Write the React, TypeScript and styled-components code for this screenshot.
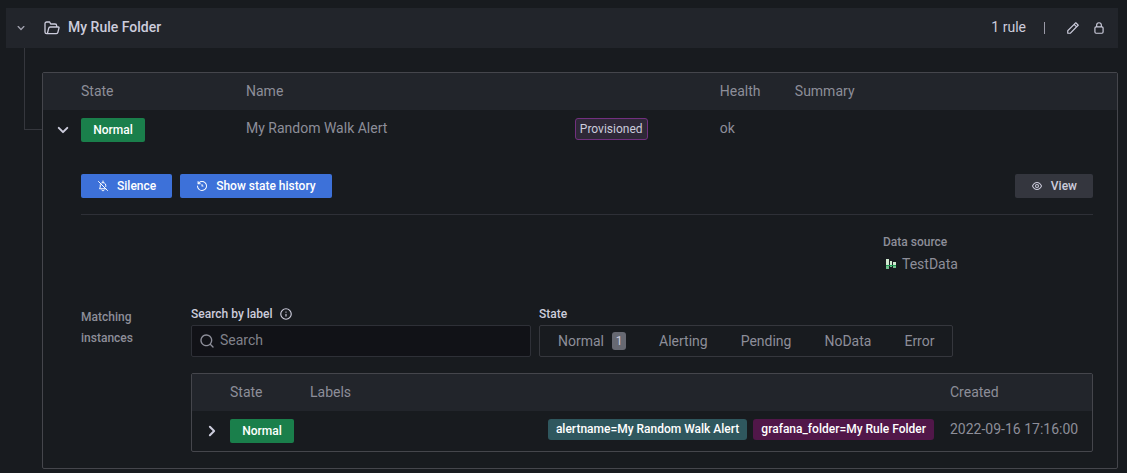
import React, { useState } from "react";
import styled, { createGlobalStyle, css } from "styled-components";

const color = {
  canvas: "#111217",
  page: "#181b1f",
  header: "#22252b",
  text: "#ccccdc",
  muted: "#8d8e99",
  weak: "#2e3037",
  medium: "#35373d",
  strong: "#45464c",
  blue: "#3d71d9",
  green: "#1a7f4b",
};

const GlobalStyle = createGlobalStyle`
  *, *::before, *::after { box-sizing: border-box; }
  body {
    margin: 0;
    background: ${color.page};
    color: ${color.text};
    font: 400 14px/20px Roboto, "Liberation Sans", sans-serif;
  }
  button, input { font: inherit; color: inherit; }
`;

/* ---------- icons ---------- */

const fills = {
  down: "M17,9.17a1,1,0,0,0-1.41,0L12,12.71,8.46,9.17a1,1,0,0,0-1.41,0,1,1,0,0,0,0,1.42l4.24,4.24a1,1,0,0,0,1.42,0L17,10.59A1,1,0,0,0,17,9.17Z",
  right: "M14.83,11.29,10.59,7.05a1,1,0,0,0-1.42,0,1,1,0,0,0,0,1.41L12.71,12,9.17,15.54a1,1,0,0,0,0,1.41,1,1,0,0,0,.71.29,1,1,0,0,0,.71-.29l4.24-4.24A1,1,0,0,0,14.83,11.29Z",
  search: "M21.71,20.29,18,16.61A9,9,0,1,0,16.61,18l3.68,3.68a1,1,0,0,0,1.42,0A1,1,0,0,0,21.71,20.29ZM11,18a7,7,0,1,1,7-7A7,7,0,0,1,11,18Z",
  lock: "M17,9V7A5,5,0,0,0,7,7V9a3,3,0,0,0-3,3v7a3,3,0,0,0,3,3H17a3,3,0,0,0,3-3V12A3,3,0,0,0,17,9ZM9,7a3,3,0,0,1,6,0V9H9Zm9,12a1,1,0,0,1-1,1H7a1,1,0,0,1-1-1V12a1,1,0,0,1,1-1H17a1,1,0,0,1,1,1Z",
  pen: "M22,7.24a1,1,0,0,0-.29-.71L17.47,2.29A1,1,0,0,0,16.76,2a1,1,0,0,0-.71.29L13.22,5.12h0L2.29,16.05a1,1,0,0,0-.29.71V21a1,1,0,0,0,1,1H7.24A1,1,0,0,0,8,21.71L18.87,10.78h0L21.71,8a1.19,1.19,0,0,0,.22-.33,1,1,0,0,0,0-.24.7.7,0,0,0,0-.14ZM6.83,20H4V17.17l9.93-9.93,2.83,2.83ZM18.17,8.66,15.34,5.83l1.42-1.41,2.82,2.82Z",
  info: "M12,2A10,10,0,1,0,22,12,10,10,0,0,0,12,2Zm0,18a8,8,0,1,1,8-8A8,8,0,0,1,12,20Zm0-8.5a1,1,0,0,0-1,1v3a1,1,0,0,0,2,0v-3A1,1,0,0,0,12,11.5Zm0-4a1.25,1.25,0,1,0,1.25,1.25A1.25,1.25,0,0,0,12,7.5Z",
  eye: "M21.92,11.6C19.9,6.91,16.1,4,12,4S4.1,6.91,2.08,11.6a1,1,0,0,0,0,.8C4.1,17.09,7.9,20,12,20s7.9-2.91,9.92-7.6A1,1,0,0,0,21.92,11.6ZM12,18c-3.17,0-6.17-2.29-7.9-6C5.83,8.29,8.83,6,12,6s6.17,2.29,7.9,6C18.17,15.71,15.17,18,12,18ZM12,8a4,4,0,1,0,4,4A4,4,0,0,0,12,8Zm0,6a2,2,0,1,1,2-2A2,2,0,0,1,12,14Z",
  history: "M12,2A10,10,0,0,0,5.12,4.77V3a1,1,0,0,0-2,0V7.5a1,1,0,0,0,1,1H8.62a1,1,0,0,0,0-2H6.22A8,8,0,1,1,4,12a1,1,0,0,0-2,0A10,10,0,1,0,12,2Zm0,6a1,1,0,0,0-1,1v3a1,1,0,0,0,1,1h2a1,1,0,0,0,0-2H13V9A1,1,0,0,0,12,8Z",
};

const strokes = {
  folder: "M5 20.500H4A2.500 2.500 0 0 1 1.500 18V5.500A2.500 2.500 0 0 1 4 3H8.500l1.500 3H16.500A2.500 2.500 0 0 1 19 8.500V10.500M5 20.500l2-8A2.500 2.500 0 0 1 9.500 10.500H21.500a1 1 0 0 1 1 1.300l-1.700 6.700A2.500 2.500 0 0 1 18.500 20.500Z",
  bellSlash: "M3 3L21 21M9.500 5.600A5.500 5.500 0 0 1 17.500 10.500V13M6.500 9.500V14L5 17.500H17.500M9.500 20.500A3 3 0 0 0 14.500 20.500M12 2V4.500",
};

const Svg = styled.svg<{ $size: number }>`
  display: block;
  flex: none;
  width: ${(p) => p.$size}px;
  height: ${(p) => p.$size}px;
`;

type IconName = keyof typeof fills | keyof typeof strokes;

function Icon({ name, size = 14 }: { name: IconName; size?: number }) {
  const filled = name in fills;
  return (
    <Svg $size={size} viewBox="0 0 24 24" aria-hidden="true">
      {filled ? (
        <path d={fills[name as keyof typeof fills]} fill="currentColor" />
      ) : (
        <path
          d={strokes[name as keyof typeof strokes]}
          fill="none"
          stroke="currentColor"
          strokeWidth="2"
          strokeLinecap="round"
          strokeLinejoin="round"
        />
      )}
    </Svg>
  );
}

function TestDataLogo() {
  return (
    <Svg $size={16} viewBox="0 0 16 16" aria-hidden="true">
      <path d="M3 3h3v6H3zM7 5h2v4H7zM10 6h3v3h-3z" fill="#d0e8cf" />
      <path d="M3 9h3v4H3zM7 9h2v2H7zM10 9h3v3h-3z" fill="#73c08c" />
      <path d="M3 9h10v1H3z" fill="#1f9d55" />
    </Svg>
  );
}

/* ---------- page and folder header ---------- */

const Page = styled.main`
  padding: 8px 9px 4px 6px;
`;

const FolderHeader = styled.header`
  display: flex;
  align-items: center;
  height: 40px;
  padding: 0 11px 0 7px;
  background: ${color.header};
`;

const IconButton = styled.button<{ $muted?: boolean }>`
  display: flex;
  align-items: center;
  justify-content: center;
  width: 16px;
  height: 16px;
  padding: 0;
  border: 0;
  background: none;
  color: ${(p) => (p.$muted ? "#a0a1ae" : color.text)};
`;

const FolderTitle = styled.h2`
  display: flex;
  align-items: center;
  gap: 8px;
  flex: 1;
  margin: 0 0 0 15px;
  font-size: 14px;
  font-weight: 500;
`;

const HeaderText = styled.span`
  padding-bottom: 2px;
`;

const FolderMeta = styled.div`
  display: flex;
  align-items: center;
  gap: 10px;
`;

const Divider = styled.span`
  width: 1px;
  height: 12px;
  margin: 0 10px 0 8px;
  background: #9a9aa7;
`;

const FolderBody = styled.div`
  display: flex;
  padding-left: 18px;
`;

const Guide = styled.div`
  flex: none;
  width: 18px;
  height: 82px;
  border: solid ${color.medium};
  border-width: 0 0 1px 1px;
`;

/* ---------- tables ---------- */

const Frame = styled.section<{ $top: number }>`
  flex: 1;
  min-width: 0;
  margin-top: ${(p) => p.$top}px;
  border: 1px solid ${color.strong};
  border-radius: 2px;
`;

const Table = styled.table`
  width: 100%;
  table-layout: fixed;
  border-collapse: collapse;
  color: ${color.muted};
`;

const Col = styled.col<{ $width?: string }>`
  width: ${(p) => p.$width ?? "auto"};
`;

const Th = styled.th`
  height: 37px;
  padding: 0 0 2px;
  background: ${color.header};
  font-weight: 400;
  text-align: left;
`;

const Td = styled.td`
  height: 40px;
  padding: 8px 0 0;
  vertical-align: top;
  white-space: nowrap;
`;

const ToggleCell = styled(Td)`
  padding: 8px 0 0 8px;
  color: ${color.text};
`;

const RowToggle = styled(IconButton)`
  width: 24px;
  height: 24px;
`;

const StateTag = styled.span`
  display: flex;
  align-items: center;
  justify-content: center;
  width: 64px;
  height: 24px;
  border-radius: 2px;
  background: ${color.green};
  color: #fff;
  font-size: 12px;
  font-weight: 500;
`;

const Provisioned = styled.span`
  display: inline-flex;
  align-items: center;
  height: 22px;
  padding: 0 4px;
  border: 1px solid #72307f;
  border-radius: 3px;
  background: #2e2837;
  color: ${color.text};
  font-size: 12px;
`;

const DetailsCell = styled.td`
  padding: 24px 24px 16px 0;
`;

/* ---------- rule details ---------- */

const Actions = styled.div`
  display: flex;
  gap: 8px;
  padding-bottom: 16px;
  border-bottom: 1px solid ${color.weak};
`;

const ActionButton = styled.button<{ $secondary?: boolean }>`
  display: flex;
  align-items: center;
  gap: 8px;
  height: 24px;
  padding: 0 16px;
  border: 0;
  border-radius: 2px;
  background: ${color.blue};
  color: #fff;
  font-size: 12px;
  font-weight: 500;
  ${(p) =>
    p.$secondary &&
    css`
      margin-left: auto;
      background: #34363e;
      color: ${color.text};
    `}
`;

const SourceRow = styled.div`
  display: flex;
  justify-content: flex-end;
  padding: 17px 0 33px;
`;

const Source = styled.div`
  width: 210px;
`;

const SmallLabel = styled.div`
  font-size: 12px;
  font-weight: 500;
  line-height: 21px;
`;

const SourceName = styled.div`
  display: flex;
  align-items: center;
  gap: 3px;
  height: 21px;
`;

const Instances = styled.div`
  display: flex;
`;

const InstancesLabel = styled(SmallLabel)`
  flex: none;
  width: 110px;
  padding: 0 40px 0 0;
`;

const InstancesBody = styled.div`
  flex: 1;
  min-width: 0;
`;

const Filters = styled.div`
  display: flex;
  gap: 8px;
`;

const fieldLabel = css`
  display: flex;
  align-items: center;
  gap: 6px;
  height: 18px;
  margin: 0;
  padding: 0 0 4px;
  color: ${color.text};
  font-size: 12px;
  font-weight: 500;
  line-height: 14px;
`;

const SearchField = styled.div`
  flex: 0 1 340px;
`;

const FieldLabel = styled.label`
  ${fieldLabel}
`;

const SearchBox = styled.div`
  display: flex;
  align-items: center;
  gap: 5px;
  height: 32px;
  padding: 0 7px;
  border: 1px solid ${color.weak};
  border-radius: 2px;
  background: ${color.canvas};
`;

const SearchInput = styled.input`
  flex: 1;
  min-width: 0;
  height: 30px;
  padding: 0 0 2px;
  border: 0;
  outline: 0;
  background: none;
  color: ${color.text};
  &::placeholder {
    color: #80818a;
    opacity: 1;
  }
`;

const StateField = styled.fieldset`
  min-width: 0;
  margin: 0;
  padding: 0;
  border: 0;
`;

const Legend = styled.legend`
  ${fieldLabel}
`;

const RadioGroup = styled.div`
  display: flex;
  gap: 1px;
  height: 32px;
  padding: 0 2px;
  border: 1px solid ${color.medium};
  border-radius: 2px;
`;

const RadioLabel = styled.label`
  position: relative;
  display: flex;
  align-items: center;
  gap: 8px;
  padding: 0 16px;
  cursor: pointer;
`;

const RadioInput = styled.input`
  position: absolute;
  inset: 0;
  margin: 0;
  opacity: 0;
`;

const Count = styled.span`
  display: flex;
  align-items: center;
  justify-content: center;
  width: 14px;
  height: 18px;
  border-radius: 3px;
  background: #676972;
  color: ${color.text};
  font-size: 12px;
`;

const Labels = styled.ul`
  display: flex;
  justify-content: flex-end;
  gap: 6px;
  margin: 0;
  padding: 0 16px 0 0;
  list-style: none;
`;

const Label = styled.li<{ $color: string }>`
  height: 21px;
  padding: 0 8px;
  border-radius: 3px;
  background: ${(p) => p.$color};
  color: #fff;
  font-size: 12px;
  font-weight: 500;
  line-height: 21px;
`;

const states = [
  { name: "Normal", count: 1 },
  { name: "Alerting" },
  { name: "Pending" },
  { name: "NoData" },
  { name: "Error" },
];

function InstanceTable() {
  return (
    <Frame $top={16}>
      <Table>
        <colgroup>
          <Col $width="38px" />
          <Col $width="80px" />
          <Col />
          <Col $width="142px" />
        </colgroup>
        <thead>
          <tr>
            <Th />
            <Th scope="col">State</Th>
            <Th scope="col">Labels</Th>
            <Th scope="col">Created</Th>
          </tr>
        </thead>
        <tbody>
          <tr>
            <ToggleCell>
              <RowToggle aria-label="Expand instance">
                <Icon name="right" size={24} />
              </RowToggle>
            </ToggleCell>
            <Td>
              <StateTag>Normal</StateTag>
            </Td>
            <Td>
              <Labels>
                <Label $color="#2f575e">alertname=My Random Walk Alert</Label>
                <Label $color="#511749">grafana_folder=My Rule Folder</Label>
              </Labels>
            </Td>
            <Td>2022-09-16 17:16:00</Td>
          </tr>
        </tbody>
      </Table>
    </Frame>
  );
}

function RuleDetails() {
  const [query, setQuery] = useState("");
  return (
    <>
      <Actions>
        <ActionButton>
          <Icon name="bellSlash" size={12} />
          Silence
        </ActionButton>
        <ActionButton>
          <Icon name="history" size={12} />
          Show state history
        </ActionButton>
        <ActionButton $secondary>
          <Icon name="eye" size={12} />
          View
        </ActionButton>
      </Actions>
      <SourceRow>
        <Source>
          <SmallLabel>Data source</SmallLabel>
          <SourceName>
            <TestDataLogo />
            TestData
          </SourceName>
        </Source>
      </SourceRow>
      <Instances>
        <InstancesLabel>Matching instances</InstancesLabel>
        <InstancesBody>
          <Filters>
            <SearchField>
              <FieldLabel htmlFor="label-search">
                Search by label
                <Icon name="info" size={14} />
              </FieldLabel>
              <SearchBox>
                <Icon name="search" size={16} />
                <SearchInput
                  id="label-search"
                  placeholder="Search"
                  value={query}
                  onChange={(e) => setQuery(e.target.value)}
                />
              </SearchBox>
            </SearchField>
            <StateField>
              <Legend>State</Legend>
              <RadioGroup>
                {states.map((s) => (
                  <RadioLabel key={s.name}>
                    <RadioInput type="radio" name="instance-state" value={s.name} />
                    {s.name}
                    {s.count && <Count>{s.count}</Count>}
                  </RadioLabel>
                ))}
              </RadioGroup>
            </StateField>
          </Filters>
          <InstanceTable />
        </InstancesBody>
      </Instances>
    </>
  );
}

export default function App() {
  return (
    <Page>
      <GlobalStyle />
      <FolderHeader>
        <IconButton $muted aria-label="Collapse folder">
          <Icon name="down" size={16} />
        </IconButton>
        <FolderTitle>
          <Icon name="folder" size={16} />
          <HeaderText>My Rule Folder</HeaderText>
        </FolderTitle>
        <FolderMeta>
          <HeaderText>1 rule</HeaderText>
          <Divider />
          <IconButton aria-label="Edit folder">
            <Icon name="pen" />
          </IconButton>
          <IconButton aria-label="Manage permissions">
            <Icon name="lock" />
          </IconButton>
        </FolderMeta>
      </FolderHeader>
      <FolderBody>
        <Guide />
        <Frame $top={24}>
          <Table>
            <colgroup>
              <Col $width="38px" />
              <Col $width="165px" />
              <Col />
              <Col $width="145px" />
              <Col $width="75px" />
              <Col $width="30%" />
            </colgroup>
            <thead>
              <tr>
                <Th />
                <Th scope="col">State</Th>
                <Th scope="col">Name</Th>
                <Th />
                <Th scope="col">Health</Th>
                <Th scope="col">Summary</Th>
              </tr>
            </thead>
            <tbody>
              <tr>
                <ToggleCell>
                  <RowToggle aria-label="Collapse rule">
                    <Icon name="down" size={24} />
                  </RowToggle>
                </ToggleCell>
                <Td>
                  <StateTag>Normal</StateTag>
                </Td>
                <Td>My Random Walk Alert</Td>
                <Td>
                  <Provisioned>Provisioned</Provisioned>
                </Td>
                <Td>ok</Td>
                <Td />
              </tr>
              <tr>
                <td />
                <DetailsCell colSpan={5}>
                  <RuleDetails />
                </DetailsCell>
              </tr>
            </tbody>
          </Table>
        </Frame>
      </FolderBody>
    </Page>
  );
}
